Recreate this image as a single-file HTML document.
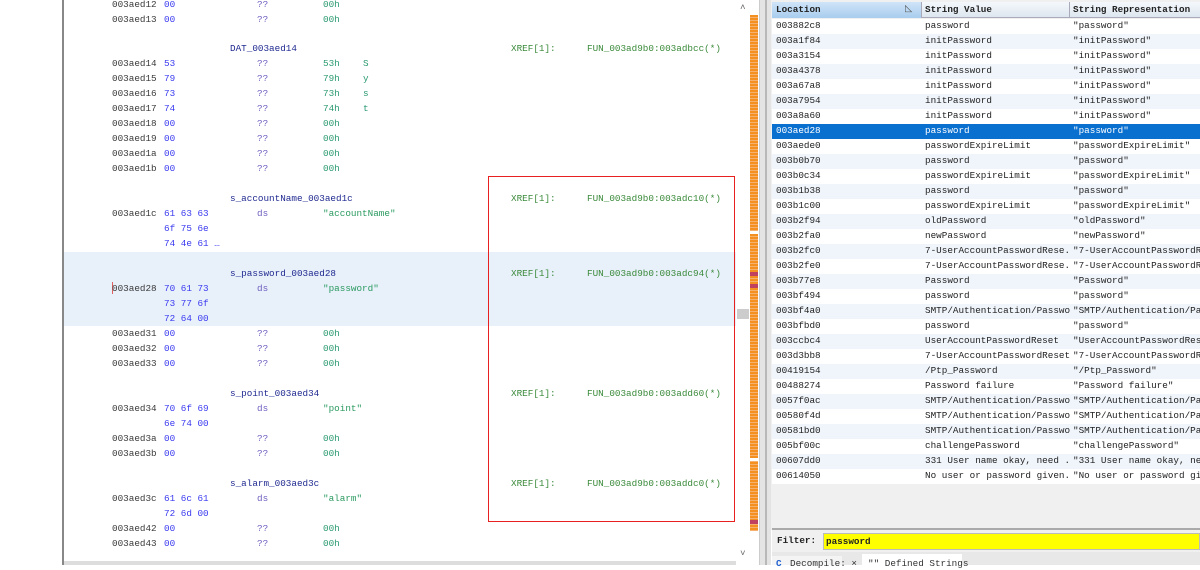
<!DOCTYPE html>
<html><head><meta charset="utf-8"><style>
*{margin:0;padding:0;box-sizing:border-box}
body{width:1200px;height:565px;overflow:hidden;background:#fff;position:relative;font-family:"Liberation Mono",monospace;font-size:9.3px}
.a{position:absolute;white-space:pre;line-height:12px}
.ad{color:#3a3a3a}.by{color:#3a3af0}.q{color:#7060c0}.v{color:#2a9a70}.lb{color:#202a90}.x{color:#3a8a3a}.s{color:#2a9a60}
.r{position:absolute;left:772px;width:428px;height:15px;overflow:hidden}
.r span{position:absolute;top:1px;line-height:12px;white-space:pre;color:#222;font-size:9.3px;overflow:hidden}
</style></head><body>
<div style="position:absolute;left:62px;top:0;width:2px;height:565px;background:#888"></div>
<div style="position:absolute;left:64px;top:252px;width:672px;height:74px;background:#e8f0fa"></div>
<div style="position:absolute;left:112px;top:282px;width:1px;height:12px;background:#e06060"></div>
<div style="position:absolute;left:488px;top:176px;width:247px;height:346px;border:1.5px solid #e82020"></div>
<div style="position:absolute;left:736px;top:0;width:22px;height:565px;background:#fff"></div>
<div class="a" style="left:740px;top:2px;color:#666">˄</div>
<div class="a" style="left:740px;top:548px;color:#666">˅</div>
<div style="position:absolute;left:750px;top:15px;width:8px;height:516px;background:repeating-linear-gradient(#f39020 0 2px,#f6b070 2px 3px)"></div>
<div style="position:absolute;left:750px;top:231px;width:8px;height:3px;background:#fff"></div>
<div style="position:absolute;left:750px;top:458px;width:8px;height:3px;background:#fff"></div>
<div style="position:absolute;left:750px;top:272px;width:8px;height:4px;background:#c04060"></div>
<div style="position:absolute;left:750px;top:284px;width:8px;height:4px;background:#c04060"></div>
<div style="position:absolute;left:750px;top:520px;width:8px;height:4px;background:#c04060"></div>
<div style="position:absolute;left:737px;top:309px;width:12px;height:10px;background:#ccc"></div>
<div style="position:absolute;left:64px;top:561px;width:672px;height:4px;background:#ddd"></div>
<div style="position:absolute;left:759px;top:0;width:12px;height:565px;background:#e4e4e4;border-left:1px solid #ccc"></div>
<div style="position:absolute;left:765px;top:0;width:2px;height:565px;background:#b8b8b8"></div>
<div id="left"></div>

<div style="position:absolute;left:771px;top:0;width:429px;height:530px;background:#f0f0f0"></div>
<div style="position:absolute;left:772px;top:2px;width:428px;height:16px;background:linear-gradient(#f4f8fc,#dde6ef);border-bottom:1px solid #aab"></div>
<div style="position:absolute;left:772px;top:2px;width:149px;height:16px;background:linear-gradient(#cfe4f8,#a8cdee)"></div>
<div style="position:absolute;left:921px;top:2px;width:1px;height:16px;background:#aab"></div>
<div style="position:absolute;left:1069px;top:2px;width:1px;height:16px;background:#aab"></div>
<div class="a" style="left:776px;top:4px;color:#222;font-weight:bold">Location</div>
<div class="a" style="left:905px;top:3px;color:#555">◺</div>
<div class="a" style="left:925px;top:4px;color:#222;font-weight:bold">String Value</div>
<div class="a" style="left:1073px;top:4px;color:#222;font-weight:bold">String Representation</div>
<div id="rows"></div>
<div style="position:absolute;left:772px;top:528px;width:428px;height:2px;background:#aaa"></div>
<div style="position:absolute;left:772px;top:530px;width:428px;height:22px;background:#f0f0f0"></div>
<div class="a" style="left:777px;top:535px;color:#222;font-weight:bold">Filter:</div>
<div style="position:absolute;left:823px;top:533px;width:377px;height:17px;background:#ffff00;border:1px solid #bbb"></div>
<div class="a" style="left:826px;top:536px;color:#222;font-weight:bold">password</div>
<div style="position:absolute;left:772px;top:552px;width:428px;height:13px;background:#e8e8e8"></div>
<div style="position:absolute;left:772px;top:556px;width:70px;height:9px;background:#f4f4f4"></div>
<div class="a" style="left:776px;top:558px;color:#2060d0;font-weight:bold">C</div>
<div class="a" style="left:790px;top:558px;color:#333">Decompile: ×</div>
<div style="position:absolute;left:862px;top:554px;width:100px;height:11px;background:#fff"></div>
<div class="a" style="left:868px;top:558px;color:#333">"" Defined Strings</div>
<script>
var L=[
[-1,"003aed12","00","??","00h",""],[14,"003aed13","00","??","00h",""],
[58,"003aed14","53","??","53h","S"],[73,"003aed15","79","??","79h","y"],[88,"003aed16","73","??","73h","s"],[103,"003aed17","74","??","74h","t"],
[118,"003aed18","00","??","00h",""],[133,"003aed19","00","??","00h",""],[148,"003aed1a","00","??","00h",""],[163,"003aed1b","00","??","00h",""],
[208,"003aed1c","61 63 63","ds","\"accountName\"",""],[223,"","6f 75 6e","","",""],[238,"","74 4e 61 …","","",""],
[283,"003aed28","70 61 73","ds","\"password\"",""],[298,"","73 77 6f","","",""],[313,"","72 64 00","","",""],
[328,"003aed31","00","??","00h",""],[343,"003aed32","00","??","00h",""],[358,"003aed33","00","??","00h",""],
[403,"003aed34","70 6f 69","ds","\"point\"",""],[418,"","6e 74 00","","",""],
[433,"003aed3a","00","??","00h",""],[448,"003aed3b","00","??","00h",""],
[493,"003aed3c","61 6c 61","ds","\"alarm\"",""],[508,"","72 6d 00","","",""],
[523,"003aed42","00","??","00h",""],[538,"003aed43","00","??","00h",""]];
var lab=[[43,"DAT_003aed14","003adbcc"],[193,"s_accountName_003aed1c","003adc10"],[268,"s_password_003aed28","003adc94"],[388,"s_point_003aed34","003add60"],[478,"s_alarm_003aed3c","003addc0"]];
var o="";
L.forEach(function(l){var t=l[0];
o+='<div class="a ad" style="left:112px;top:'+t+'px">'+l[1]+'</div><div class="a by" style="left:164px;top:'+t+'px">'+l[2]+'</div><div class="a q" style="left:257px;top:'+t+'px">'+l[3]+'</div><div class="a '+(l[3]=="ds"?"s":"v")+'" style="left:323px;top:'+t+'px">'+l[4]+'</div><div class="a v" style="left:363px;top:'+t+'px">'+l[5]+'</div>';});
lab.forEach(function(l){o+='<div class="a lb" style="left:230px;top:'+l[0]+'px">'+l[1]+'</div><div class="a x" style="left:511px;top:'+l[0]+'px">XREF[1]:</div><div class="a x" style="left:587px;top:'+l[0]+'px">FUN_003ad9b0:'+l[2]+'(*)</div>';});
document.getElementById("left").innerHTML=o;
var d=[["003882c8","password","\"password\""],["003a1f84","initPassword","\"initPassword\""],["003a3154","initPassword","\"initPassword\""],["003a4378","initPassword","\"initPassword\""],["003a67a8","initPassword","\"initPassword\""],["003a7954","initPassword","\"initPassword\""],["003a8a60","initPassword","\"initPassword\""],["003aed28","password","\"password\""],["003aede0","passwordExpireLimit","\"passwordExpireLimit\""],["003b0b70","password","\"password\""],["003b0c34","passwordExpireLimit","\"passwordExpireLimit\""],["003b1b38","password","\"password\""],["003b1c00","passwordExpireLimit","\"passwordExpireLimit\""],["003b2f94","oldPassword","\"oldPassword\""],["003b2fa0","newPassword","\"newPassword\""],["003b2fc0","7-UserAccountPasswordRese...","\"7-UserAccountPasswordRes..."],["003b2fe0","7-UserAccountPasswordRese...","\"7-UserAccountPasswordRes..."],["003b77e8","Password","\"Password\""],["003bf494","password","\"password\""],["003bf4a0","SMTP/Authentication/Password","\"SMTP/Authentication/Pass..."],["003bfbd0","password","\"password\""],["003ccbc4","UserAccountPasswordReset","\"UserAccountPasswordReset\""],["003d3bb8","7-UserAccountPasswordReset","\"7-UserAccountPasswordRes..."],["00419154","/Ptp_Password","\"/Ptp_Password\""],["00488274","Password failure","\"Password failure\""],["0057f0ac","SMTP/Authentication/Password","\"SMTP/Authentication/Pass..."],["00580f4d","SMTP/Authentication/Password","\"SMTP/Authentication/Pass..."],["00581bd0","SMTP/Authentication/Password","\"SMTP/Authentication/Pass..."],["005bf00c","challengePassword","\"challengePassword\""],["00607dd0","331 User name okay, need ...","\"331 User name okay, need..."],["00614050","No user or password given.","\"No user or password give..."]];
var h="";for(var i=0;i<d.length;i++){var sel=i==7;var bg=sel?"#0a70d0":(i%2?"#f0f5fb":"#fff");var c=sel?"color:#fff;":"";
h+='<div class="r" style="top:'+(19+i*15)+'px;background:'+bg+'"><span style="left:4px;'+c+'">'+d[i][0]+'</span><span style="left:153px;width:146px;'+c+'">'+d[i][1]+'</span><span style="left:301px;'+c+'">'+d[i][2]+'</span></div>';}
document.getElementById("rows").innerHTML=h;
</script>
</body></html>
